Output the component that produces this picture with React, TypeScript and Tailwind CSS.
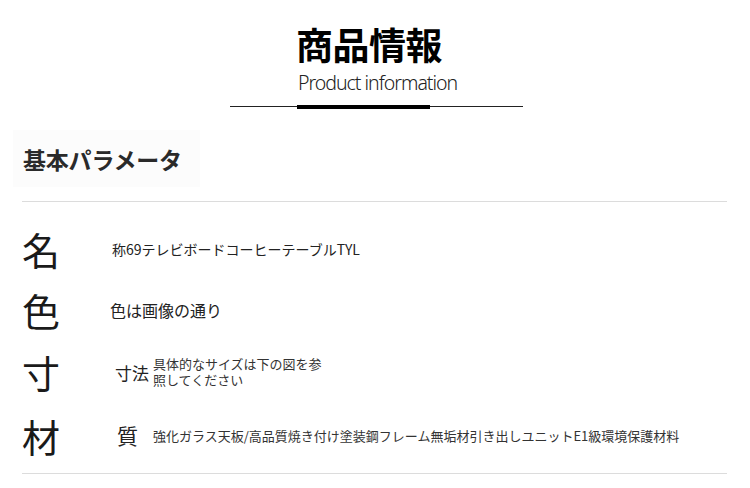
const jp = "font-['Noto_Sans_CJK_JP','Noto_Sans',sans-serif]";

function SpecRow({
  label,
  height,
  children,
}: {
  label: string;
  height: string;
  children: React.ReactNode;
}) {
  return (
    <div className={`flex items-center ${height}`}>
      <div className="flex w-[88px] items-center pl-[22px] text-[38px] leading-none text-[#1a1a1a]">
        {label}
      </div>
      {children}
    </div>
  );
}

export default function App() {
  return (
    <div className={`relative h-[488px] w-[750px] overflow-hidden bg-white ${jp}`}>
      {/* heading */}
      <div className="flex flex-col items-start pl-[296px] pt-[26px]">
        <div className="text-[37px] font-bold leading-none tracking-[-0.5px] text-black">商品情報</div>
        <div className="mt-[10px] pl-[2px] font-['Noto_Sans',sans-serif] text-[19.5px] font-light leading-none tracking-[-1px] text-[#222]">
          Product information
        </div>
      </div>
      <div className="ml-[230px] mt-[12px] flex h-[4px] w-[293px] items-center">
        <div className="h-[1.5px] w-[67px] bg-[#222]" />
        <div className="h-[4px] w-[133px] bg-black" />
        <div className="h-[1.5px] flex-1 bg-[#222]" />
      </div>

      {/* section title */}
      <div className="ml-[13px] mt-[21px] flex h-[57px] w-[187px] items-center bg-[#fcfcfc] pl-[10px] pt-[3px]">
        <span className="text-[23px] font-bold leading-none tracking-[-0.2px] text-[#2a2a2a]">基本パラメータ</span>
      </div>
      <div className="ml-[22px] mt-[14px] h-px w-[705px] bg-[#dcdcdc]" />

      {/* rows */}
      <div className="mt-[15px] flex flex-col">
        <SpecRow label="名" height="h-[64px]">
          <span className="ml-[24px] text-[14px] leading-none text-[#222]">称69テレビボードコーヒーテーブルTYL</span>
        </SpecRow>
        <SpecRow label="色" height="h-[58px]">
          <span className="ml-[22px] text-[16px] leading-none text-[#222]">色は画像の通り</span>
        </SpecRow>
        <SpecRow label="寸" height="h-[67px]">
          <div className="ml-[27px] flex items-center">
            <span className="text-[17px] leading-none text-[#222]">寸法</span>
            <p className="ml-[4px] w-[172px] text-[13px] leading-[16px] text-[#333]">
              具体的なサイズは下の図を参照してください
            </p>
          </div>
        </SpecRow>
        <SpecRow label="材" height="h-[60px]">
          <div className="ml-[29px] flex items-center">
            <span className="text-[21px] leading-none text-[#222]">質</span>
            <span className="ml-[15px] text-[13px] leading-none text-[#333]">
              強化ガラス天板/高品質焼き付け塗装鋼フレーム無垢材引き出しユニットE1級環境保護材料
            </span>
          </div>
        </SpecRow>
      </div>
      <div className="ml-[22px] mt-[7px] h-px w-[705px] bg-[#dcdcdc]" />
    </div>
  );
}
